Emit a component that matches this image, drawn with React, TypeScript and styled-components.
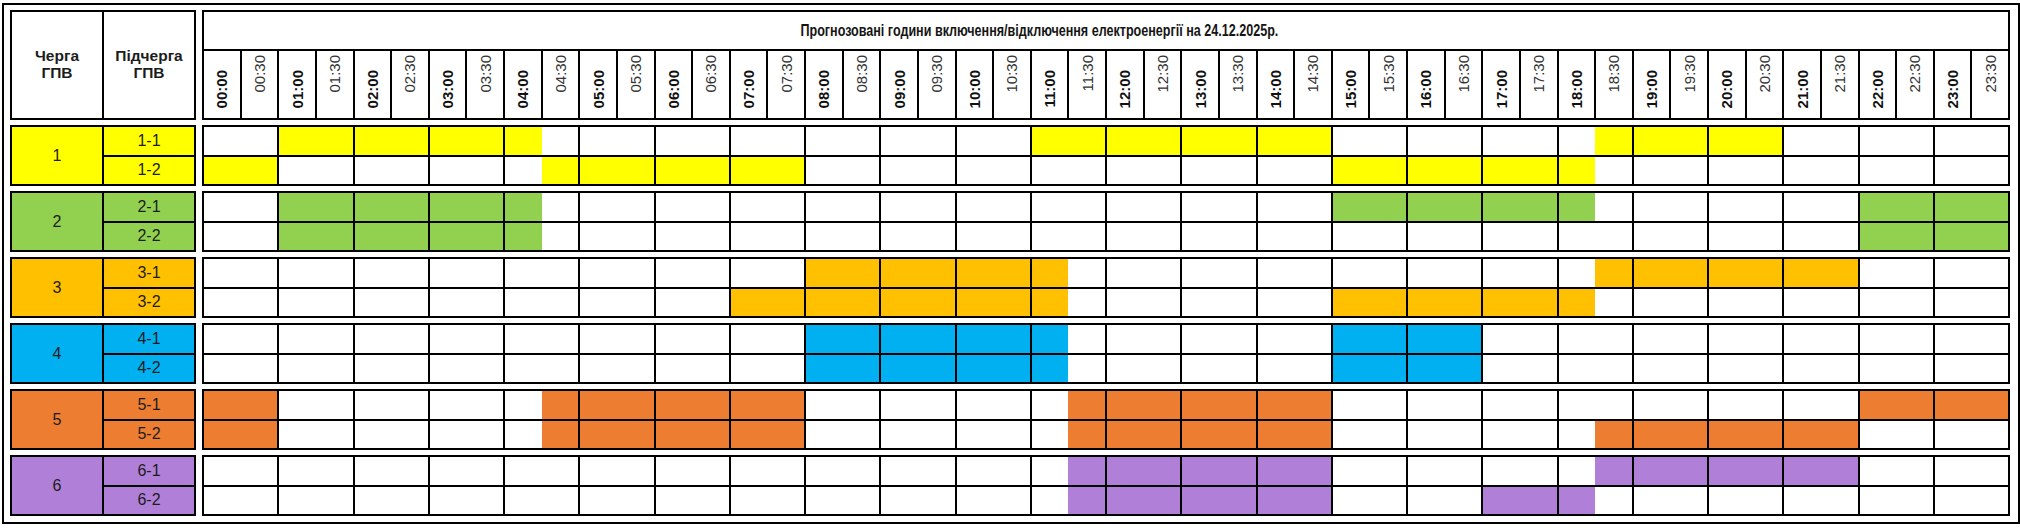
import React from 'react';
import styled, { createGlobalStyle } from 'styled-components';

const Global = createGlobalStyle`
  html, body { margin: 0; padding: 0; background: #fff; }
  body { font-family: "Liberation Sans", Arial, sans-serif; color: #1c1c1c; }
`;

const Frame = styled.div`
  box-sizing: border-box;
  margin: 3px 0 0 2px;
  width: 2018px;
  height: 521px;
  border: 2px solid #000;
  padding: 5px 8px 6px 6px;
  display: grid;
  grid-template-columns: 186px 1808px;
  grid-template-rows: 110px repeat(6, 61px);
  column-gap: 6px;
  row-gap: 5px;
`;

const Block = styled.div<{ $cols: string; $rows: string }>`
  display: grid;
  grid-template-columns: ${(p) => p.$cols};
  grid-template-rows: ${(p) => p.$rows};
  gap: 2px;
  padding: 2px;
  background: #000;
  min-width: 0;
`;

const HeadCell = styled.div`
  background: #fff;
  display: flex;
  align-items: center;
  justify-content: center;
  text-align: center;
  font-weight: 700;
  font-size: 15.5px;
  line-height: 17px;
  padding-bottom: 2px;
`;

const GroupCell = styled.div<{ $bg: string }>`
  grid-row: span 2;
  background: ${(p) => p.$bg};
  display: flex;
  align-items: center;
  justify-content: center;
  font-size: 16px;
`;

const SubCell = styled.div<{ $bg: string }>`
  background: ${(p) => p.$bg};
  display: flex;
  align-items: center;
  justify-content: center;
  font-size: 16px;
`;

const TitleCell = styled.div`
  grid-column: 1 / -1;
  background: #fff;
  display: flex;
  align-items: center;
  justify-content: center;
  padding-right: 134px;
`;

const TitleText = styled.span`
  display: inline-block;
  font-family: "Liberation Sans", Arial, sans-serif;
  font-weight: 700;
  font-size: 16px;
  white-space: nowrap;
  transform: scaleX(0.785);
  color: #151515;
`;

const TimeCell = styled.div<{ $major: boolean }>`
  background: #fff;
  display: flex;
  flex-direction: column;
  align-items: center;
  justify-content: ${(p) => (p.$major ? 'flex-end' : 'flex-start')};
  padding: ${(p) => (p.$major ? '0 0 10px' : '4px 0 0')};
  overflow: hidden;
`;

const TimeText = styled.span<{ $major: boolean }>`
  writing-mode: vertical-rl;
  transform: rotate(180deg);
  font-size: 15px;
  line-height: 1;
  font-weight: ${(p) => (p.$major ? 700 : 400)};
  color: ${(p) => (p.$major ? '#111' : '#333')};
`;

const HourCell = styled.div`
  grid-column: span 2;
  display: flex;
  background: #fff;
`;

const Half = styled.div<{ $bg: string }>`
  flex: 1 1 0;
  background: ${(p) => p.$bg};
`;

type Range = [number, number];
interface Group {
  id: number;
  color: string;
  rows: Range[][];
}

const groups: Group[] = [
  { id: 1, color: '#FFFF00', rows: [[[2, 9], [22, 30], [37, 42]], [[0, 2], [9, 16], [30, 37]]] },
  { id: 2, color: '#92D050', rows: [[[2, 9], [30, 37], [44, 48]], [[2, 9], [44, 48]]] },
  { id: 3, color: '#FFC000', rows: [[[16, 23], [37, 44]], [[14, 23], [30, 37]]] },
  { id: 4, color: '#00B0F0', rows: [[[16, 23], [30, 34]], [[16, 23], [30, 34]]] },
  { id: 5, color: '#ED7D31', rows: [[[0, 2], [9, 16], [23, 30], [44, 48]], [[0, 2], [9, 16], [23, 30], [37, 44]]] },
  { id: 6, color: '#B07FD8', rows: [[[23, 30], [37, 44]], [[23, 30], [34, 37]]] },
];

const pad = (n: number) => String(n).padStart(2, '0');
const slots = Array.from({ length: 48 }, (_, i) => ({
  label: `${pad(Math.floor(i / 2))}:${i % 2 ? '30' : '00'}`,
  major: i % 2 === 0,
}));

const isOn = (ranges: Range[], slot: number) => ranges.some(([a, b]) => slot >= a && slot < b);

export default function App() {
  return (
    <>
      <Global />
      <Frame>
        <Block $cols="1fr 1fr" $rows="1fr">
          <HeadCell>
            Черга
            <br />
            ГПВ
          </HeadCell>
          <HeadCell>
            Підчерга
            <br />
            ГПВ
          </HeadCell>
        </Block>
        <Block $cols="repeat(48, 1fr)" $rows="37px 1fr">
          <TitleCell>
            <TitleText>Прогнозовані години включення/відключення електроенергії на 24.12.2025р.</TitleText>
          </TitleCell>
          {slots.map((s) => (
            <TimeCell key={s.label} $major={s.major}>
              <TimeText $major={s.major}>{s.label}</TimeText>
            </TimeCell>
          ))}
        </Block>
        {groups.map((g) => (
          <React.Fragment key={g.id}>
            <Block $cols="1fr 1fr" $rows="1fr 1fr">
              <GroupCell $bg={g.color}>{g.id}</GroupCell>
              <SubCell $bg={g.color}>{`${g.id}-1`}</SubCell>
              <SubCell $bg={g.color}>{`${g.id}-2`}</SubCell>
            </Block>
            <Block $cols="repeat(48, 1fr)" $rows="1fr 1fr">
              {g.rows.map((ranges, r) =>
                Array.from({ length: 24 }, (_, h) => (
                  <HourCell key={`${r}-${h}`}>
                    <Half $bg={isOn(ranges, h * 2) ? g.color : '#fff'} />
                    <Half $bg={isOn(ranges, h * 2 + 1) ? g.color : '#fff'} />
                  </HourCell>
                ))
              )}
            </Block>
          </React.Fragment>
        ))}
      </Frame>
    </>
  );
}
